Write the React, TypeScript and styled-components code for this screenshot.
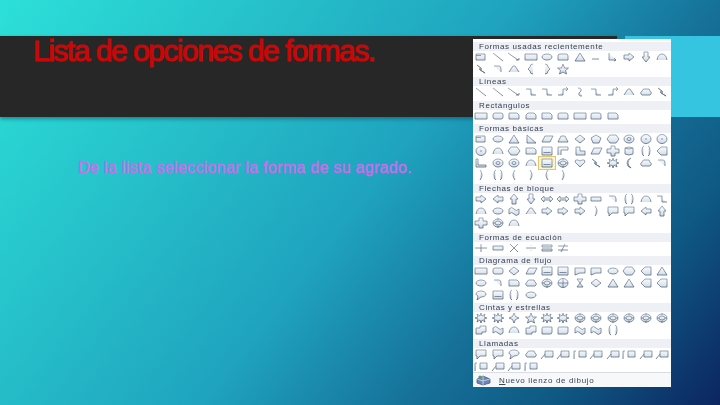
import React from 'react';
import styled, { createGlobalStyle } from 'styled-components';

const GlobalStyle = createGlobalStyle`
  html, body {
    margin: 0;
    padding: 0;
    width: 720px;
    height: 405px;
    overflow: hidden;
  }
`;

const Slide = styled.div`
  position: relative;
  width: 720px;
  height: 405px;
  padding-top: 36px;
  box-sizing: border-box;
  overflow: hidden;
  background: linear-gradient(128deg, #2ce0d8 0%, #25bcc8 30%, #1fa3bf 50%, #167098 70%, #0f5a85 83%, #0c2560 100%);
  font-family: 'Liberation Sans', Arial, sans-serif;
`;

const Banner = styled.div`
  display: flex;
  gap: 8px;
  height: 81px;
`;

const TitleBar = styled.div`
  width: 617px;
  padding-left: 33px;
  box-sizing: border-box;
  background: #272727;
  box-shadow: 0 2px 4px rgba(0, 50, 70, 0.45);
`;

const AccentBar = styled.div`
  flex: 1;
  background: #36c5e0;
`;

const Title = styled.h1`
  margin: 0;
  font-size: 30px;
  font-weight: 400;
  line-height: 30px;
  letter-spacing: -1.5px;
  color: #c80808;
  -webkit-text-stroke: 1px #c80808;
`;

const Subtitle = styled.p`
  margin: 41px 0 0 78px;
  font-size: 16px;
  font-weight: 400;
  line-height: 20px;
  letter-spacing: 0.3px;
  color: #c76ee9;
  -webkit-text-stroke: 0.45px #c76ee9;
`;

const Gallery = styled.div`
  position: absolute;
  left: 473px;
  top: 39px;
  width: 198px;
  height: 348px;
  background: #ffffff;
  display: flex;
  flex-direction: column;
  filter: blur(0.35px);
`;

const SectionTitle = styled.div<{ $top: number }>`
  height: 9px;
  margin-top: ${(p) => p.$top}px;
  padding-left: 6px;
  background: #eef0f5;
  font-size: 8px;
  line-height: 9px;
  letter-spacing: 0.6px;
  color: #34404f;
  white-space: nowrap;
`;

const Row = styled.div`
  display: flex;
  height: 12px;
`;

const Cell = styled.div<{ $selected?: boolean }>`
  width: 16.45px;
  height: 12px;
  flex: none;
  display: flex;
  align-items: center;
  justify-content: center;
  ${(p) => p.$selected && 'background: #fdf3c9; outline: 1px solid #e3c56f;'}
`;

const Footer = styled.div`
  display: flex;
  align-items: center;
  gap: 8px;
  height: 16px;
  margin-top: 0.5px;
  padding-left: 3px;
  border-top: 1px solid #d9dde3;
  box-sizing: border-box;
  background: #f7f8fa;
  font-size: 8px;
  letter-spacing: 0.65px;
  color: #3a4656;

  span::first-letter {
    text-decoration: underline;
  }
`;

const HiddenDefs = styled.svg`
  position: absolute;
  width: 0;
  height: 0;
`;

const shapes: Record<string, string> = {
  text: 'M2 3H11V9H2ZM2 4.5H7',
  line: 'M2 2L12 10',
  arrow: 'M1 2L11 9M9 9H12V7',
  rect: 'M1 3H13V9H1Z',
  oval: 'M2 6A5 3 0 1 0 12 6A5 3 0 1 0 2 6',
  round: 'M4 3H10Q12 3 12 5V7Q12 9 10 9H4Q2 9 2 7V5Q2 3 4 3Z',
  snip: 'M2 3H10L12 5V9H2Z',
  snip2: 'M4 3H10L12 5V9H2V5Z',
  tab: 'M4 3H10Q12 3 12 5V9H2V5Q2 3 4 3Z',
  tri: 'M7 2L12 10H2Z',
  rtri: 'M3 2L12 10H3Z',
  para: 'M5 3H13L10 9H2Z',
  trap: 'M5 3H9L12 9H2Z',
  dia: 'M7 2L12 6L7 10L2 6Z',
  pent: 'M7 2L12 5L10 10H4L2 5Z',
  hex: 'M4 2H10L13 6L10 10H4L1 6Z',
  dash: 'M3 8H10',
  elbow: 'M3 2V9H10M8 7L10 9L8 10',
  rarrow: 'M2 4H7V2L12 6L7 10V8H2Z',
  larrow: 'M12 4H7V2L2 6L7 10V8H12Z',
  uarrow: 'M5 11V6H3L7 1L11 6H9V11Z',
  darrow: 'M5 1V6H3L7 11L11 6H9V1Z',
  lr: 'M1 6L4 3V5H10V3L13 6L10 9V7H4V9Z',
  cross: 'M5 1H9V4H13V8H9V11H5V8H1V4H5Z',
  curve: 'M2 9Q3 3 7 3Q11 3 12 9',
  bolt: 'M3 2L7 5L5 6L11 10L6 7L8 6Z',
  zig: 'M2 9L6 3H8L12 9',
  hook: 'M3 3H8Q10 3 10 6V9',
  step: 'M2 3H7V9H12',
  step2: 'M2 9H7V3H12M10 1L12 3L10 5',
  scurve: 'M5 2Q9 2 8 5L6 7Q5 10 9 10',
  lbrace: 'M9 1Q6 1 6 4L4 6L6 8Q6 11 9 11',
  rbrace: 'M5 1Q8 1 8 4L10 6L8 8Q8 11 5 11',
  star: 'M7 1L8.5 5H12.5L9.5 7.5L10.5 11L7 9L3.5 11L4.5 7.5L1.5 5H5.5Z',
  burst: 'M7 1L8 4L11 2L10 5L13 6L10 7L11 10L8 8L7 11L6 8L3 10L4 7L1 6L4 5L3 2L6 4Z',
  four: 'M7 1L8.5 4.5L12 6L8.5 7.5L7 11L5.5 7.5L2 6L5.5 4.5Z',
  ring: 'M2 6A5 4 0 1 0 12 6A5 4 0 1 0 2 6M5 6A2 1.5 0 1 0 9 6A2 1.5 0 1 0 5 6',
  dot: 'M2 6A5 4.5 0 1 0 12 6A5 4.5 0 1 0 2 6M6 6H8',
  frame: 'M2 2H12V10H2ZM3.5 7.5H10.5',
  halfl: 'M2 2V10H12V8H4V2Z',
  lshape: 'M3 2H7V6H12V10H3Z',
  corner: 'M2 10V2H12V5H5V10',
  moon: 'M9 1Q3 6 9 11Q5 10 5 6Q5 2 9 1Z',
  cloud: 'M3 9Q0 7 3 5Q4 2 7 3Q11 2 11 5Q14 7 11 9Z',
  heart: 'M7 10L2 5Q2 2 5 3L7 4L9 3Q12 2 12 5Z',
  lparen: 'M8 1Q4 6 8 11',
  rparen: 'M6 1Q10 6 6 11',
  brace: 'M5 1Q3 1 3 6Q3 11 5 11M9 1Q11 1 11 6Q11 11 9 11',
  minus: 'M2 4H12V8H2Z',
  plus: 'M1 6H13M7 2V10',
  div: 'M2 6H12M7 3V3.5M7 8.5V9',
  equal: 'M2 3H12V5H2ZM2 7H12V9H2Z',
  neq: 'M2 4H12M2 8H12M9 2L5 10',
  times: 'M3 2L11 10M11 2L3 10',
  wave: 'M2 4Q5 1 7 4T12 4V9Q9 12 7 9T2 9Z',
  scroll: 'M3 3H12V8Q12 10 10 10H2V5Q2 3 3 3Z',
  flag: 'M2 4H6V2H12V8H8V10H2Z',
  callout: 'M2 2H12V8H6L3 11V8H2Z',
  oCall: 'M2 5A5 3 0 1 1 7 8L3 11L4 7Q2 6 2 5',
  line1: 'M5 3H13V9H5ZM1 11L5 6',
  line2: 'M1 11V3H3M6 3H13V9H6Z',
  hour: 'M4 2H10L4 10H10Z',
  sumj: 'M2 6A5 4.5 0 1 0 12 6A5 4.5 0 1 0 2 6M7 1.5V10.5M2 6H12',
  cyl: 'M3 3V9Q7 11 11 9V3Q7 1 3 3M3 3Q7 5 11 3',
  wedge: 'M2 6L6 2H12V10H6Z',
  doc: 'M2 3H12V8Q7 7 2 10Z',
  gear: 'M2 6A5 4 0 1 0 12 6A5 4 0 1 0 2 6M4 6A3 2 0 1 0 10 6A3 2 0 1 0 4 6M7 1V3M7 9V11M2 6H4M10 6H12',
};

const sections: { title: string; top: number; rows: string[][] }[] = [
  {
    title: 'Formas usadas recientemente',
    top: 2.5,
    rows: [
      ['text', 'line', 'arrow', 'rect', 'oval', 'tab', 'tri', 'dash', 'elbow', 'rarrow', 'darrow', 'curve'],
      ['bolt', 'hook', 'zig', 'lbrace', 'rbrace', 'star'],
    ],
  },
  {
    title: 'Líneas',
    top: 2,
    rows: [['line', 'line', 'arrow', 'step', 'step', 'step2', 'scurve', 'step', 'step2', 'zig', 'cloud', 'bolt']],
  },
  {
    title: 'Rectángulos',
    top: 3,
    rows: [['rect', 'round', 'snip', 'snip2', 'snip', 'tab', 'rect', 'tab', 'snip']],
  },
  {
    title: 'Formas básicas',
    top: 2,
    rows: [
      ['text', 'oval', 'tri', 'rtri', 'para', 'trap', 'dia', 'pent', 'hex', 'ring', 'dot', 'dot'],
      ['dot', 'curve', 'hex', 'snip', 'frame', 'corner', 'lshape', 'para', 'cross', 'cyl', 'brace', 'wedge'],
      ['halfl', 'ring', 'ring', 'curve', 'frame', 'gear', 'heart', 'bolt', 'burst', 'moon', 'cloud', 'hook'],
      ['rparen', 'brace', 'lparen', 'rparen', 'lparen', 'rparen'],
    ],
  },
  {
    title: 'Flechas de bloque',
    top: 3,
    rows: [
      ['rarrow', 'larrow', 'uarrow', 'darrow', 'lr', 'lr', 'cross', 'minus', 'hook', 'brace', 'curve', 'step'],
      ['curve', 'oval', 'wave', 'zig', 'rarrow', 'rarrow', 'rarrow', 'rparen', 'callout', 'callout', 'larrow', 'uarrow'],
      ['cross', 'gear', 'curve'],
    ],
  },
  {
    title: 'Formas de ecuación',
    top: 4,
    rows: [['plus', 'minus', 'times', 'div', 'equal', 'neq']],
  },
  {
    title: 'Diagrama de flujo',
    top: 2,
    rows: [
      ['rect', 'round', 'dia', 'para', 'frame', 'frame', 'doc', 'doc', 'oval', 'hex', 'wedge', 'tri'],
      ['oval', 'hook', 'snip', 'cloud', 'gear', 'sumj', 'hour', 'dia', 'tri', 'tri', 'wedge', 'wedge'],
      ['oCall', 'frame', 'brace', 'oval'],
    ],
  },
  {
    title: 'Cintas y estrellas',
    top: 2,
    rows: [
      ['burst', 'burst', 'four', 'star', 'burst', 'burst', 'gear', 'gear', 'gear', 'gear', 'gear', 'gear'],
      ['flag', 'wave', 'curve', 'flag', 'scroll', 'scroll', 'wave', 'wave', 'brace'],
    ],
  },
  {
    title: 'Llamadas',
    top: 3,
    rows: [
      ['callout', 'callout', 'oCall', 'cloud', 'line1', 'line1', 'line2', 'line1', 'line1', 'line2', 'line1', 'line1'],
      ['line2', 'line1', 'line1', 'line2'],
    ],
  },
];

function Shape({ name }: { name: string }) {
  return (
    <svg width="14" height="11" viewBox="0 0 14 11" overflow="visible">
      <path d={shapes[name]} fill="url(#shapeFill)" stroke="url(#shapeStroke)" strokeWidth="0.75" />
    </svg>
  );
}

function CanvasIcon() {
  return (
    <svg width="15" height="12" viewBox="0 0 15 12">
      <path d="M1 5L7 2L14 5V9L7 11L1 9Z" fill="#6f86b5" stroke="#34507f" strokeWidth="0.7" />
      <path d="M7 2V11M1 5L7 7L14 5" fill="none" stroke="#dfe7f2" strokeWidth="0.7" />
      <circle cx="4" cy="3" r="1.6" fill="#5aa04f" />
    </svg>
  );
}

export default function App() {
  return (
    <>
      <GlobalStyle />
      <HiddenDefs>
        <defs>
          <linearGradient id="shapeFill" gradientUnits="userSpaceOnUse" x1="0" y1="1" x2="0" y2="11">
            <stop offset="0" stopColor="#ffffff" />
            <stop offset="1" stopColor="#cddae7" />
          </linearGradient>
          <linearGradient id="shapeStroke" gradientUnits="userSpaceOnUse" x1="0" y1="1" x2="0" y2="11">
            <stop offset="0" stopColor="#8494a6" />
            <stop offset="1" stopColor="#46586e" />
          </linearGradient>
        </defs>
      </HiddenDefs>
      <Slide>
        <Banner>
          <TitleBar>
            <Title>Lista de opciones de formas.</Title>
          </TitleBar>
          <AccentBar />
        </Banner>
        <Subtitle>De la lista seleccionar la forma de su agrado.</Subtitle>
        <Gallery>
          {sections.map((section) => (
            <React.Fragment key={section.title}>
              <SectionTitle $top={section.top}>{section.title}</SectionTitle>
              {section.rows.map((row, r) => (
                <Row key={r}>
                  {row.map((name, c) => (
                    <Cell
                      key={c}
                      $selected={section.title === 'Formas básicas' && r === 2 && c === 4}
                    >
                      <Shape name={name} />
                    </Cell>
                  ))}
                </Row>
              ))}
            </React.Fragment>
          ))}
          <Footer>
            <CanvasIcon />
            <span>Nuevo lienzo de dibujo</span>
          </Footer>
        </Gallery>
      </Slide>
    </>
  );
}
